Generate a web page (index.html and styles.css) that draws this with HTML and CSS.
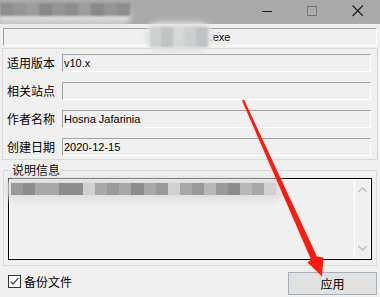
FILE: index.html
```html
<!DOCTYPE html>
<html lang="zh">
<head>
<meta charset="utf-8">
<link rel="stylesheet" href="styles.css">
</head>
<body>
<div class="window">
  <div class="titlebar">
    <div class="title-blur">
      <i class="t1"></i><i class="t2"></i><i class="t3"></i><i class="t4"></i><i class="t2"></i><i class="t1"></i><i class="t3"></i><i class="t4"></i><i class="t2"></i><i class="t1"></i>
    </div>
    <div class="controls">
      <span class="ctl"><svg width="11" height="11" viewBox="0 0 11 11"><path d="M0 5.5H10" stroke="#1a1a1a" stroke-width="1"/></svg></span>
      <span class="ctl"><svg width="11" height="11" viewBox="0 0 11 11"><rect x="0.5" y="0.5" width="9" height="9" fill="none" stroke="#777" stroke-width="1"/></svg></span>
      <span class="ctl"><svg width="12" height="12" viewBox="0 0 12 12"><path d="M0.5 0.5L11 11M11 0.5L0.5 11" stroke="#1a1a1a" stroke-width="1.1"/></svg></span>
    </div>
  </div>

  <div class="filename">
    <span class="fn-blur"><i class="f1"></i><i class="f2"></i><i class="f3"></i><i class="f1"></i><i class="f2"></i></span>
    <span class="fn-text">.exe</span>
  </div>

  <div class="info-group">
    <span class="lbl">适用版本</span><span class="field">v10.x</span>
    <span class="lbl">相关站点</span><span class="field"></span>
    <span class="lbl">作者名称</span><span class="field">Hosna Jafarinia</span>
    <span class="lbl">创建日期</span><span class="field">2020-12-15</span>
  </div>

  <fieldset class="desc">
    <legend>说明信息</legend>
    <div class="desc-box">
      <div class="desc-text">
        <div class="mosaic">
          <i class="m2"></i><i class="m1"></i><i class="m3"></i><i class="m3"></i><i class="m1"></i><i class="m1"></i><i class="m5"></i><i class="m3"></i><i class="m2"></i><i class="m3"></i><i class="m1"></i><i class="m3"></i><i class="m2"></i><i class="m5"></i><i class="m3"></i><i class="m2"></i><i class="m4"></i><i class="m2"></i><i class="m1"></i><i class="m4"></i><i class="m3"></i><i class="m5"></i>
        </div>
      </div>
      <div class="scrollbar">
        <svg width="9" height="6" viewBox="0 0 9 6"><path d="M0.5 5L4.5 1L8.5 5" fill="none" stroke="#c2c2c2" stroke-width="1.6"/></svg>
        <svg width="9" height="6" viewBox="0 0 9 6"><path d="M0.5 1L4.5 5L8.5 1" fill="none" stroke="#c2c2c2" stroke-width="1.6"/></svg>
      </div>
    </div>
  </fieldset>

  <div class="footer">
    <label class="check">
      <span class="box"><svg width="11" height="11" viewBox="0 0 11 11"><path d="M1.5 5.5L4 8L9.5 2" fill="none" stroke="#555" stroke-width="1.3"/></svg></span>
      <span>备份文件</span>
    </label>
    <button class="apply">应用</button>
  </div>

  <svg class="arrow" width="380" height="297" viewBox="0 0 380 297">
    <polygon points="242,100.6 244,99.4 317,256.5 323.5,257.5 322,276.5 307.5,262.5 311,259.5" fill="#ff1a0f"/>
  </svg>
</div>
</body>
</html>
```

FILE: styles.css
```css
* { box-sizing: border-box; }
html, body { margin: 0; padding: 0; }
body {
  width: 380px;
  height: 297px;
  overflow: hidden;
  background: #f0f0f0;
  font-family: "Noto Sans CJK SC", "Noto Sans", sans-serif;
  font-size: 12px;
  color: #000;
}
.window {
  position: relative;
  display: flex;
  flex-direction: column;
  height: 297px;
}
.titlebar {
  height: 24px;
  background: #aaaaaa;
  display: flex;
  justify-content: space-between;
  align-items: flex-start;
}
.title-blur {
  width: 130px;
  height: 13px;
  margin-top: 3px;
  display: flex;
  filter: blur(0.8px);
  border-radius: 0 6px 6px 0;
  box-shadow: 0 7px 5px 1px rgba(222, 222, 222, 0.9);
}
.title-blur i { flex: 1; }
.t1 { background: #8d8d8d; }
.t2 { background: #959595; }
.t3 { background: #9c9c9c; }
.t4 { background: #888888; }
.controls { display: flex; }
.ctl {
  width: 45px;
  height: 22px;
  display: flex;
  align-items: center;
  justify-content: center;
}
.filename {
  margin: 4px 3px 0;
  height: 18px;
  border: 1px solid;
  border-color: #a0a0a0 #ffffff #ffffff #a0a0a0;
  display: flex;
  justify-content: center;
  align-items: center;
  font-family: "Liberation Sans", Arial, sans-serif;
  font-size: 11px;
}
.fn-blur {
  width: 58px;
  height: 20px;
  display: flex;
  border-radius: 10px;
  filter: blur(1px);
  box-shadow: 0 0 5px 5px #e2e2e2;
  margin-right: 2px;
}
.fn-blur i { flex: 1; }
.f1 { background: #cdd0d0; }
.f2 { background: #bfc3c3; }
.f3 { background: #d6d8d8; }
.fn-text { line-height: 14px; }

.info-group {
  margin: 2px 2px 0;
  border: 1px solid #dadada;
  padding: 5px 6px 3px 4px;
  display: grid;
  grid-template-columns: 55px 1fr;
  row-gap: 10px;
  align-items: center;
}
.lbl {
  line-height: 18px;
  white-space: nowrap;
}
.field {
  height: 18px;
  border: 1px solid;
  border-color: #a0a0a0 #ffffff #ffffff #a0a0a0;
  padding-left: 1px;
  font-family: "Liberation Sans", Arial, sans-serif;
  font-size: 11px;
  line-height: 16px;
}

.desc {
  margin: 2px 3px 0;
  border: 1px solid #dadada;
  padding: 0 4px 5px 4px;
  min-width: 0;
}
.desc legend {
  margin-left: 2px;
  padding: 0 2px;
  line-height: 16px;
  font-size: 12px;
}
.desc-box {
  height: 82px;
  border: 1px solid #000;
  box-shadow: inset 0 0 0 1px #fff;
  padding: 1px;
  display: flex;
}
.desc-text { flex: 1; padding: 3px 0 0 1px; }
.mosaic {
  width: 265px;
  height: 12px;
  display: flex;
  filter: blur(0.5px);
  box-shadow: 0 0 7px 5px #dedede;
  border-radius: 2px;
}
.mosaic i { flex: 1; }
.m1 { background: #8c8c8c; }
.m2 { background: #9a9a9a; }
.m3 { background: #a8a8a8; }
.m4 { background: #b8b8b8; }
.m5 { background: #d0d0d0; }
.scrollbar {
  width: 16px;
  border-left: 1px solid #fff;
  display: flex;
  flex-direction: column;
  justify-content: space-between;
  align-items: center;
  padding: 7px 0 7px;
}

.footer {
  flex: 1;
  display: flex;
  justify-content: space-between;
  align-items: center;
  padding: 6px 3px 2px 8px;
}
.check {
  display: flex;
  align-items: center;
  gap: 3px;
  margin-bottom: 4px;
  font-size: 12px;
  line-height: 14px;
}
.box {
  width: 13px;
  height: 13px;
  border: 1px solid #333;
  background: #fff;
  display: flex;
  align-items: center;
  justify-content: center;
}
.apply {
  width: 89px;
  height: 23px;
  background: #e1e1e1;
  border: 1px solid #a3aeb9;
  font-family: "Noto Sans CJK SC", sans-serif;
  font-size: 12px;
  padding: 0;
  color: #000;
}
.arrow {
  position: absolute;
  left: 0;
  top: 0;
  pointer-events: none;
}
```
